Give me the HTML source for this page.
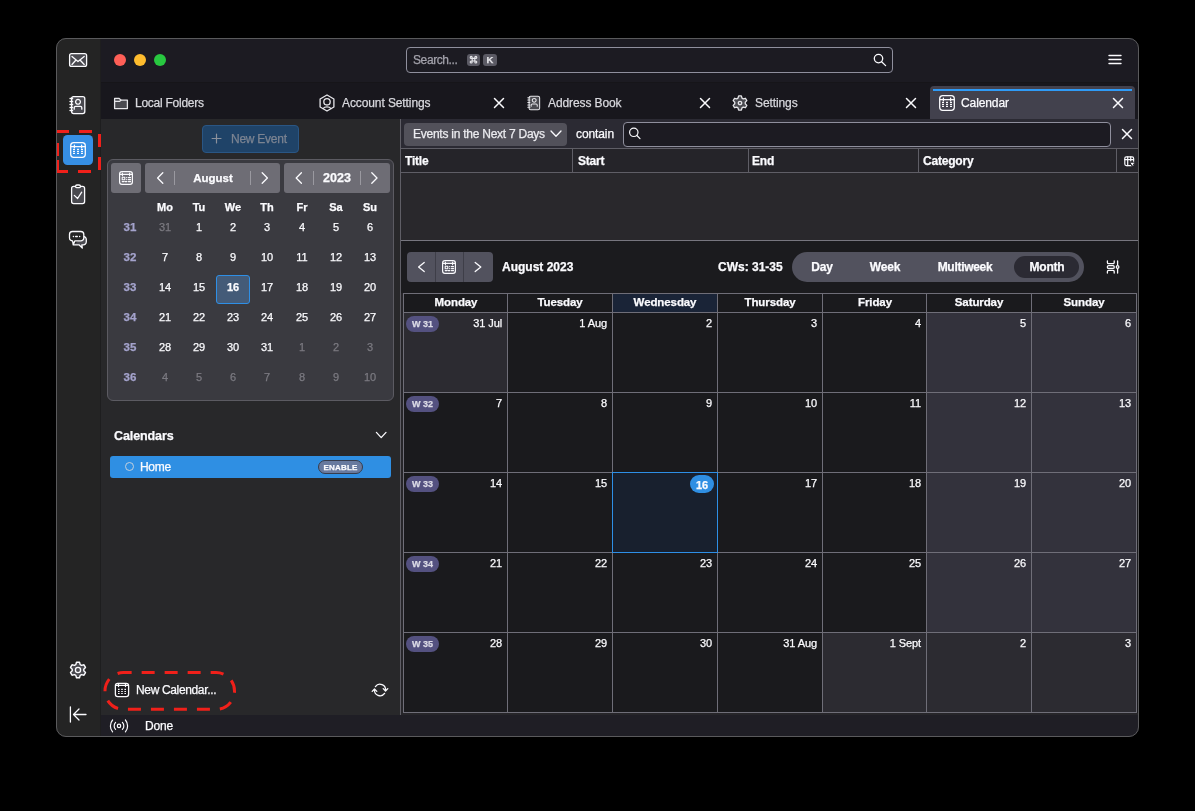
<!DOCTYPE html>
<html><head><meta charset="utf-8">
<style>
*{box-sizing:border-box;margin:0;padding:0}
html,body{width:1195px;height:811px;background:#000;overflow:hidden;font-family:"Liberation Sans",sans-serif;color:#fbfbfe}
.a{position:absolute}
#app{position:absolute;left:0;top:0;width:1195px;height:811px;clip-path:inset(38px 56px 74px 56px round 10px)}
.t{position:absolute;white-space:nowrap;line-height:1;will-change:transform;-webkit-text-stroke:0.25px currentColor}
svg{position:absolute;overflow:visible}
</style></head><body>
<div id="app">
<div class="a" style="left:56px;top:38px;width:45px;height:699px;background:#242424;"></div>
<div class="a" style="left:100px;top:38px;width:1px;height:699px;background:#1e1e1f;"></div>
<div class="a" style="left:101px;top:38px;width:1038px;height:45px;background:#1c1b22;"></div>
<div class="a" style="left:101px;top:83px;width:1038px;height:36px;background:#18171d;"></div>
<div class="a" style="left:101px;top:82px;width:1038px;height:1px;background:#161519;"></div>
<div class="a" style="left:101px;top:119px;width:300px;height:596px;background:#28282a;"></div>
<div class="a" style="left:401px;top:119px;width:738px;height:596px;background:#1b1b1e;"></div>
<div class="a" style="left:101px;top:715px;width:1038px;height:22px;background:#1f1e25;"></div>
<div class="a" style="left:114px;top:54px;width:12px;height:12px;background:#fe5f57;border-radius:6px"></div>
<div class="a" style="left:134px;top:54px;width:12px;height:12px;background:#febc2e;border-radius:6px"></div>
<div class="a" style="left:154px;top:54px;width:12px;height:12px;background:#28c840;border-radius:6px"></div>
<div class="a" style="left:406px;top:47px;width:487px;height:26px;background:#1c1b22;border:1px solid #8f8f9d;border-radius:4px"></div>
<div class="t" style="left:413.00px;top:54.00px;font-size:12px;color:#a3a2ab;letter-spacing:-0.4px;">Search...</div>
<div class="a" style="left:467px;top:54px;width:13px;height:12px;background:#5b5a64;border-radius:3px"></div>
<div class="a" style="left:483px;top:54px;width:14px;height:12px;background:#5b5a64;border-radius:3px"></div>
<div class="t" style="left:483.00px;top:55.00px;width:14px;text-align:center;font-size:9.5px;color:#e6e6ea;font-weight:700;">K</div>
<div class="a" style="left:930px;top:86px;width:205px;height:33px;background:#42414d;border-radius:4px 4px 0 0"></div>
<div class="a" style="left:933px;top:89px;width:199px;height:2px;background:#2f9bf7;"></div>
<div class="t" style="left:135.00px;top:97.00px;font-size:12px;color:#d9d9de;letter-spacing:-0.25px;">Local Folders</div>
<div class="t" style="left:342.00px;top:97.00px;font-size:12px;color:#d9d9de;letter-spacing:-0.1px;">Account Settings</div>
<div class="t" style="left:548.00px;top:97.00px;font-size:12px;color:#d9d9de;letter-spacing:-0.1px;">Address Book</div>
<div class="t" style="left:755.00px;top:97.00px;font-size:12px;color:#d9d9de;letter-spacing:-0.1px;">Settings</div>
<div class="t" style="left:961.00px;top:97.00px;font-size:12px;color:#fbfbfe;letter-spacing:-0.1px;">Calendar</div>
<div class="a" style="left:202px;top:125px;width:97px;height:28px;background:#1f4368;border-radius:4px;border:1px solid #2a5684"></div>
<div class="t" style="left:231.00px;top:133.00px;font-size:12px;color:#7c8492;letter-spacing:-0.25px;">New Event</div>
<div class="a" style="left:107px;top:159px;width:287px;height:242px;background:#3a3a40;border:1px solid #5c5b62;border-radius:6px"></div>
<div class="a" style="left:111px;top:163px;width:30px;height:30px;background:#6e6d75;border-radius:3px"></div>
<div class="a" style="left:145px;top:163px;width:135px;height:30px;background:#6e6d75;border-radius:3px"></div>
<div class="a" style="left:284px;top:163px;width:106px;height:30px;background:#6e6d75;border-radius:3px"></div>
<div class="a" style="left:174px;top:171px;width:1px;height:14px;background:#9a99a0;"></div>
<div class="a" style="left:250px;top:171px;width:1px;height:14px;background:#9a99a0;"></div>
<div class="a" style="left:313px;top:171px;width:1px;height:14px;background:#9a99a0;"></div>
<div class="a" style="left:360px;top:171px;width:1px;height:14px;background:#9a99a0;"></div>
<div class="t" style="left:182.80px;top:173.00px;width:60px;text-align:center;font-size:11.5px;color:#fbfbfe;font-weight:700;">August</div>
<div class="t" style="left:316.80px;top:172.00px;width:40px;text-align:center;font-size:12.5px;color:#fbfbfe;font-weight:700;">2023</div>
<div class="t" style="left:144.50px;top:202.00px;width:40px;text-align:center;font-size:11px;color:#fbfbfe;font-weight:700;">Mo</div>
<div class="t" style="left:178.80px;top:202.00px;width:40px;text-align:center;font-size:11px;color:#fbfbfe;font-weight:700;">Tu</div>
<div class="t" style="left:213.00px;top:202.00px;width:40px;text-align:center;font-size:11px;color:#fbfbfe;font-weight:700;">We</div>
<div class="t" style="left:247.30px;top:202.00px;width:40px;text-align:center;font-size:11px;color:#fbfbfe;font-weight:700;">Th</div>
<div class="t" style="left:281.50px;top:202.00px;width:40px;text-align:center;font-size:11px;color:#fbfbfe;font-weight:700;">Fr</div>
<div class="t" style="left:315.80px;top:202.00px;width:40px;text-align:center;font-size:11px;color:#fbfbfe;font-weight:700;">Sa</div>
<div class="t" style="left:350.00px;top:202.00px;width:40px;text-align:center;font-size:11px;color:#fbfbfe;font-weight:700;">Su</div>
<div class="a" style="left:216px;top:275px;width:34px;height:29px;background:#445b78;border:1px solid #2e8fe6;border-radius:3px"></div>
<div class="t" style="left:110.00px;top:222.00px;width:40px;text-align:center;font-size:11.5px;color:#a4a3cc;font-weight:700;">31</div>
<div class="t" style="left:144.50px;top:222.00px;width:40px;text-align:center;font-size:11px;color:#7b7a81;">31</div>
<div class="t" style="left:178.80px;top:222.00px;width:40px;text-align:center;font-size:11px;color:#fbfbfe;">1</div>
<div class="t" style="left:213.00px;top:222.00px;width:40px;text-align:center;font-size:11px;color:#fbfbfe;">2</div>
<div class="t" style="left:247.30px;top:222.00px;width:40px;text-align:center;font-size:11px;color:#fbfbfe;">3</div>
<div class="t" style="left:281.50px;top:222.00px;width:40px;text-align:center;font-size:11px;color:#fbfbfe;">4</div>
<div class="t" style="left:315.80px;top:222.00px;width:40px;text-align:center;font-size:11px;color:#fbfbfe;">5</div>
<div class="t" style="left:350.00px;top:222.00px;width:40px;text-align:center;font-size:11px;color:#fbfbfe;">6</div>
<div class="t" style="left:110.00px;top:252.00px;width:40px;text-align:center;font-size:11.5px;color:#a4a3cc;font-weight:700;">32</div>
<div class="t" style="left:144.50px;top:252.00px;width:40px;text-align:center;font-size:11px;color:#fbfbfe;">7</div>
<div class="t" style="left:178.80px;top:252.00px;width:40px;text-align:center;font-size:11px;color:#fbfbfe;">8</div>
<div class="t" style="left:213.00px;top:252.00px;width:40px;text-align:center;font-size:11px;color:#fbfbfe;">9</div>
<div class="t" style="left:247.30px;top:252.00px;width:40px;text-align:center;font-size:11px;color:#fbfbfe;">10</div>
<div class="t" style="left:281.50px;top:252.00px;width:40px;text-align:center;font-size:11px;color:#fbfbfe;">11</div>
<div class="t" style="left:315.80px;top:252.00px;width:40px;text-align:center;font-size:11px;color:#fbfbfe;">12</div>
<div class="t" style="left:350.00px;top:252.00px;width:40px;text-align:center;font-size:11px;color:#fbfbfe;">13</div>
<div class="t" style="left:110.00px;top:282.00px;width:40px;text-align:center;font-size:11.5px;color:#a4a3cc;font-weight:700;">33</div>
<div class="t" style="left:144.50px;top:282.00px;width:40px;text-align:center;font-size:11px;color:#fbfbfe;">14</div>
<div class="t" style="left:178.80px;top:282.00px;width:40px;text-align:center;font-size:11px;color:#fbfbfe;">15</div>
<div class="t" style="left:213.00px;top:282.00px;width:40px;text-align:center;font-size:11px;color:#fbfbfe;font-weight:700;">16</div>
<div class="t" style="left:247.30px;top:282.00px;width:40px;text-align:center;font-size:11px;color:#fbfbfe;">17</div>
<div class="t" style="left:281.50px;top:282.00px;width:40px;text-align:center;font-size:11px;color:#fbfbfe;">18</div>
<div class="t" style="left:315.80px;top:282.00px;width:40px;text-align:center;font-size:11px;color:#fbfbfe;">19</div>
<div class="t" style="left:350.00px;top:282.00px;width:40px;text-align:center;font-size:11px;color:#fbfbfe;">20</div>
<div class="t" style="left:110.00px;top:312.00px;width:40px;text-align:center;font-size:11.5px;color:#a4a3cc;font-weight:700;">34</div>
<div class="t" style="left:144.50px;top:312.00px;width:40px;text-align:center;font-size:11px;color:#fbfbfe;">21</div>
<div class="t" style="left:178.80px;top:312.00px;width:40px;text-align:center;font-size:11px;color:#fbfbfe;">22</div>
<div class="t" style="left:213.00px;top:312.00px;width:40px;text-align:center;font-size:11px;color:#fbfbfe;">23</div>
<div class="t" style="left:247.30px;top:312.00px;width:40px;text-align:center;font-size:11px;color:#fbfbfe;">24</div>
<div class="t" style="left:281.50px;top:312.00px;width:40px;text-align:center;font-size:11px;color:#fbfbfe;">25</div>
<div class="t" style="left:315.80px;top:312.00px;width:40px;text-align:center;font-size:11px;color:#fbfbfe;">26</div>
<div class="t" style="left:350.00px;top:312.00px;width:40px;text-align:center;font-size:11px;color:#fbfbfe;">27</div>
<div class="t" style="left:110.00px;top:342.00px;width:40px;text-align:center;font-size:11.5px;color:#a4a3cc;font-weight:700;">35</div>
<div class="t" style="left:144.50px;top:342.00px;width:40px;text-align:center;font-size:11px;color:#fbfbfe;">28</div>
<div class="t" style="left:178.80px;top:342.00px;width:40px;text-align:center;font-size:11px;color:#fbfbfe;">29</div>
<div class="t" style="left:213.00px;top:342.00px;width:40px;text-align:center;font-size:11px;color:#fbfbfe;">30</div>
<div class="t" style="left:247.30px;top:342.00px;width:40px;text-align:center;font-size:11px;color:#fbfbfe;">31</div>
<div class="t" style="left:281.50px;top:342.00px;width:40px;text-align:center;font-size:11px;color:#7b7a81;">1</div>
<div class="t" style="left:315.80px;top:342.00px;width:40px;text-align:center;font-size:11px;color:#7b7a81;">2</div>
<div class="t" style="left:350.00px;top:342.00px;width:40px;text-align:center;font-size:11px;color:#7b7a81;">3</div>
<div class="t" style="left:110.00px;top:372.00px;width:40px;text-align:center;font-size:11.5px;color:#a4a3cc;font-weight:700;">36</div>
<div class="t" style="left:144.50px;top:372.00px;width:40px;text-align:center;font-size:11px;color:#7b7a81;">4</div>
<div class="t" style="left:178.80px;top:372.00px;width:40px;text-align:center;font-size:11px;color:#7b7a81;">5</div>
<div class="t" style="left:213.00px;top:372.00px;width:40px;text-align:center;font-size:11px;color:#7b7a81;">6</div>
<div class="t" style="left:247.30px;top:372.00px;width:40px;text-align:center;font-size:11px;color:#7b7a81;">7</div>
<div class="t" style="left:281.50px;top:372.00px;width:40px;text-align:center;font-size:11px;color:#7b7a81;">8</div>
<div class="t" style="left:315.80px;top:372.00px;width:40px;text-align:center;font-size:11px;color:#7b7a81;">9</div>
<div class="t" style="left:350.00px;top:372.00px;width:40px;text-align:center;font-size:11px;color:#7b7a81;">10</div>
<div class="t" style="left:114.00px;top:430.00px;font-size:12.5px;color:#fbfbfe;font-weight:700;letter-spacing:-0.1px;">Calendars</div>
<div class="a" style="left:110px;top:456px;width:281px;height:22px;background:#2f8fe3;border-radius:3px"></div>
<div class="a" style="left:125px;top:462px;width:9px;height:9px;background:transparent;border-radius:50%;border:1.9px solid #c3d0de"></div>
<div class="t" style="left:140.00px;top:461.00px;font-size:12px;color:#fbfbfe;letter-spacing:-0.3px;">Home</div>
<div class="a" style="left:318px;top:460px;width:45px;height:14px;background:#687a9f;border-radius:7px;border:1px solid #363c4c"></div>
<div class="t" style="left:318.00px;top:464.00px;width:45px;text-align:center;font-size:8px;color:#fbfbfe;font-weight:700;letter-spacing:0.2px;">ENABLE</div>
<div class="t" style="left:136.00px;top:684.00px;font-size:12px;color:#fbfbfe;letter-spacing:-0.35px;">New Calendar...</div>
<div class="t" style="left:145.00px;top:720.00px;font-size:12px;color:#fbfbfe;letter-spacing:-0.2px;">Done</div>
<div class="a" style="left:401px;top:119px;width:738px;height:30px;background:#2b2a33;"></div>
<div class="a" style="left:404px;top:123px;width:163px;height:23px;background:#52515a;border-radius:4px"></div>
<div class="t" style="left:412.50px;top:128.00px;font-size:12px;color:#ececf0;letter-spacing:-0.25px;">Events in the Next 7 Days</div>
<div class="t" style="left:575.50px;top:128.00px;font-size:12px;color:#fbfbfe;letter-spacing:-0.1px;">contain</div>
<div class="a" style="left:623px;top:122px;width:488px;height:25px;background:#1c1b22;border:1px solid #8f8f9d;border-radius:4px"></div>
<div class="a" style="left:401px;top:149px;width:738px;height:24px;background:#252429;"></div>
<div class="a" style="left:401px;top:148px;width:738px;height:1px;background:#5f5e66;"></div>
<div class="a" style="left:401px;top:172px;width:738px;height:1px;background:#5f5e66;"></div>
<div class="a" style="left:572px;top:149px;width:1px;height:23px;background:#5f5e66;"></div>
<div class="a" style="left:748px;top:149px;width:1px;height:23px;background:#5f5e66;"></div>
<div class="a" style="left:918px;top:149px;width:1px;height:23px;background:#5f5e66;"></div>
<div class="a" style="left:1116px;top:149px;width:1px;height:23px;background:#5f5e66;"></div>
<div class="t" style="left:405.00px;top:155.00px;font-size:12px;color:#fbfbfe;font-weight:700;letter-spacing:-0.2px;">Title</div>
<div class="t" style="left:578.00px;top:155.00px;font-size:12px;color:#fbfbfe;font-weight:700;letter-spacing:-0.2px;">Start</div>
<div class="t" style="left:752.00px;top:155.00px;font-size:12px;color:#fbfbfe;font-weight:700;letter-spacing:-0.2px;">End</div>
<div class="t" style="left:923.00px;top:155.00px;font-size:12px;color:#fbfbfe;font-weight:700;letter-spacing:-0.2px;">Category</div>
<div class="a" style="left:401px;top:173px;width:738px;height:67px;background:#29282c;"></div>
<div class="a" style="left:401px;top:240px;width:738px;height:1px;background:#77767f;"></div>
<div class="a" style="left:400px;top:119px;width:1px;height:596px;background:#5f5e66;"></div>
<div class="a" style="left:407px;top:252px;width:86px;height:30px;background:#52525e;border-radius:4px"></div>
<div class="a" style="left:435px;top:252px;width:1px;height:30px;background:#3e3e48;"></div>
<div class="a" style="left:463px;top:252px;width:1px;height:30px;background:#3e3e48;"></div>
<div class="t" style="left:502.00px;top:261.00px;font-size:12px;color:#fbfbfe;font-weight:700;">August 2023</div>
<div class="t" style="left:718.00px;top:261.00px;font-size:12px;color:#fbfbfe;font-weight:700;">CWs: 31-35</div>
<div class="a" style="left:792px;top:252px;width:292px;height:30px;background:#52525e;border-radius:15px"></div>
<div class="a" style="left:1014px;top:256px;width:65px;height:22px;background:#2b2a33;border-radius:11px"></div>
<div class="t" style="left:782.00px;top:261.00px;width:80px;text-align:center;font-size:12px;color:#fbfbfe;font-weight:700;letter-spacing:-0.2px;">Day</div>
<div class="t" style="left:845.00px;top:261.00px;width:80px;text-align:center;font-size:12px;color:#fbfbfe;font-weight:700;letter-spacing:-0.2px;">Week</div>
<div class="t" style="left:924.80px;top:261.00px;width:80px;text-align:center;font-size:12px;color:#fbfbfe;font-weight:700;letter-spacing:-0.3px;">Multiweek</div>
<div class="t" style="left:1006.60px;top:261.00px;width:80px;text-align:center;font-size:12px;color:#fbfbfe;font-weight:700;letter-spacing:-0.2px;">Month</div>
<div class="a" style="left:401px;top:293px;width:2px;height:422px;background:#262529;"></div>
<div class="a" style="left:401px;top:713px;width:738px;height:2px;background:#262529;"></div>
<div class="a" style="left:403px;top:293px;width:734px;height:420px;background:#6f6e78;"></div>
<div class="a" style="left:404px;top:294px;width:103px;height:18px;background:#1a1a1d;"></div>
<div class="t" style="left:405.50px;top:297.00px;width:100px;text-align:center;font-size:11.5px;color:#fbfbfe;font-weight:700;letter-spacing:-0.1px;">Monday</div>
<div class="a" style="left:508px;top:294px;width:104px;height:18px;background:#1a1a1d;"></div>
<div class="t" style="left:510.00px;top:297.00px;width:100px;text-align:center;font-size:11.5px;color:#fbfbfe;font-weight:700;letter-spacing:-0.1px;">Tuesday</div>
<div class="a" style="left:613px;top:294px;width:104px;height:18px;background:#1a2437;"></div>
<div class="t" style="left:615.00px;top:297.00px;width:100px;text-align:center;font-size:11.5px;color:#fbfbfe;font-weight:700;letter-spacing:-0.1px;">Wednesday</div>
<div class="a" style="left:718px;top:294px;width:104px;height:18px;background:#1a1a1d;"></div>
<div class="t" style="left:720.00px;top:297.00px;width:100px;text-align:center;font-size:11.5px;color:#fbfbfe;font-weight:700;letter-spacing:-0.1px;">Thursday</div>
<div class="a" style="left:823px;top:294px;width:103px;height:18px;background:#1a1a1d;"></div>
<div class="t" style="left:824.50px;top:297.00px;width:100px;text-align:center;font-size:11.5px;color:#fbfbfe;font-weight:700;letter-spacing:-0.1px;">Friday</div>
<div class="a" style="left:927px;top:294px;width:104px;height:18px;background:#1a1a1d;"></div>
<div class="t" style="left:929.00px;top:297.00px;width:100px;text-align:center;font-size:11.5px;color:#fbfbfe;font-weight:700;letter-spacing:-0.1px;">Saturday</div>
<div class="a" style="left:1032px;top:294px;width:104px;height:18px;background:#1a1a1d;"></div>
<div class="t" style="left:1034.00px;top:297.00px;width:100px;text-align:center;font-size:11.5px;color:#fbfbfe;font-weight:700;letter-spacing:-0.1px;">Sunday</div>
<div class="a" style="left:404px;top:313px;width:103px;height:79px;background:#2c2b31;"></div>
<div class="t" style="left:412.00px;top:318.00px;width:90px;text-align:right;font-size:11px;color:#fbfbfe;letter-spacing:-0.1px;">31 Jul</div>
<div class="a" style="left:508px;top:313px;width:104px;height:79px;background:#1a1a1d;"></div>
<div class="t" style="left:517.00px;top:318.00px;width:90px;text-align:right;font-size:11px;color:#fbfbfe;letter-spacing:-0.1px;">1 Aug</div>
<div class="a" style="left:613px;top:313px;width:104px;height:79px;background:#1a1a1d;"></div>
<div class="t" style="left:622.00px;top:318.00px;width:90px;text-align:right;font-size:11px;color:#fbfbfe;letter-spacing:-0.1px;">2</div>
<div class="a" style="left:718px;top:313px;width:104px;height:79px;background:#1a1a1d;"></div>
<div class="t" style="left:727.00px;top:318.00px;width:90px;text-align:right;font-size:11px;color:#fbfbfe;letter-spacing:-0.1px;">3</div>
<div class="a" style="left:823px;top:313px;width:103px;height:79px;background:#1a1a1d;"></div>
<div class="t" style="left:831.00px;top:318.00px;width:90px;text-align:right;font-size:11px;color:#fbfbfe;letter-spacing:-0.1px;">4</div>
<div class="a" style="left:927px;top:313px;width:104px;height:79px;background:#33323c;"></div>
<div class="t" style="left:936.00px;top:318.00px;width:90px;text-align:right;font-size:11px;color:#fbfbfe;letter-spacing:-0.1px;">5</div>
<div class="a" style="left:1032px;top:313px;width:104px;height:79px;background:#33323c;"></div>
<div class="t" style="left:1041.00px;top:318.00px;width:90px;text-align:right;font-size:11px;color:#fbfbfe;letter-spacing:-0.1px;">6</div>
<div class="a" style="left:406px;top:316px;width:33px;height:16px;background:#545180;border-radius:8px"></div>
<div class="t" style="left:406.00px;top:320.00px;width:33px;text-align:center;font-size:9px;color:#dcdbe6;font-weight:700;">W 31</div>
<div class="a" style="left:404px;top:393px;width:103px;height:79px;background:#1a1a1d;"></div>
<div class="t" style="left:412.00px;top:398.00px;width:90px;text-align:right;font-size:11px;color:#fbfbfe;letter-spacing:-0.1px;">7</div>
<div class="a" style="left:508px;top:393px;width:104px;height:79px;background:#1a1a1d;"></div>
<div class="t" style="left:517.00px;top:398.00px;width:90px;text-align:right;font-size:11px;color:#fbfbfe;letter-spacing:-0.1px;">8</div>
<div class="a" style="left:613px;top:393px;width:104px;height:79px;background:#1a1a1d;"></div>
<div class="t" style="left:622.00px;top:398.00px;width:90px;text-align:right;font-size:11px;color:#fbfbfe;letter-spacing:-0.1px;">9</div>
<div class="a" style="left:718px;top:393px;width:104px;height:79px;background:#1a1a1d;"></div>
<div class="t" style="left:727.00px;top:398.00px;width:90px;text-align:right;font-size:11px;color:#fbfbfe;letter-spacing:-0.1px;">10</div>
<div class="a" style="left:823px;top:393px;width:103px;height:79px;background:#1a1a1d;"></div>
<div class="t" style="left:831.00px;top:398.00px;width:90px;text-align:right;font-size:11px;color:#fbfbfe;letter-spacing:-0.1px;">11</div>
<div class="a" style="left:927px;top:393px;width:104px;height:79px;background:#33323c;"></div>
<div class="t" style="left:936.00px;top:398.00px;width:90px;text-align:right;font-size:11px;color:#fbfbfe;letter-spacing:-0.1px;">12</div>
<div class="a" style="left:1032px;top:393px;width:104px;height:79px;background:#33323c;"></div>
<div class="t" style="left:1041.00px;top:398.00px;width:90px;text-align:right;font-size:11px;color:#fbfbfe;letter-spacing:-0.1px;">13</div>
<div class="a" style="left:406px;top:396px;width:33px;height:16px;background:#545180;border-radius:8px"></div>
<div class="t" style="left:406.00px;top:400.00px;width:33px;text-align:center;font-size:9px;color:#dcdbe6;font-weight:700;">W 32</div>
<div class="a" style="left:404px;top:473px;width:103px;height:79px;background:#1a1a1d;"></div>
<div class="t" style="left:412.00px;top:478.00px;width:90px;text-align:right;font-size:11px;color:#fbfbfe;letter-spacing:-0.1px;">14</div>
<div class="a" style="left:508px;top:473px;width:104px;height:79px;background:#1a1a1d;"></div>
<div class="t" style="left:517.00px;top:478.00px;width:90px;text-align:right;font-size:11px;color:#fbfbfe;letter-spacing:-0.1px;">15</div>
<div class="a" style="left:613px;top:473px;width:104px;height:79px;background:#18202e;"></div>
<div class="a" style="left:612px;top:472px;width:106px;height:81px;background:transparent;border:1px solid #2e8fe6"></div>
<div class="a" style="left:690px;top:475px;width:24px;height:18px;background:#2f8fe3;border-radius:9px"></div>
<div class="t" style="left:690.00px;top:480.00px;width:24px;text-align:center;font-size:11px;color:#fbfbfe;font-weight:700;">16</div>
<div class="a" style="left:718px;top:473px;width:104px;height:79px;background:#1a1a1d;"></div>
<div class="t" style="left:727.00px;top:478.00px;width:90px;text-align:right;font-size:11px;color:#fbfbfe;letter-spacing:-0.1px;">17</div>
<div class="a" style="left:823px;top:473px;width:103px;height:79px;background:#1a1a1d;"></div>
<div class="t" style="left:831.00px;top:478.00px;width:90px;text-align:right;font-size:11px;color:#fbfbfe;letter-spacing:-0.1px;">18</div>
<div class="a" style="left:927px;top:473px;width:104px;height:79px;background:#33323c;"></div>
<div class="t" style="left:936.00px;top:478.00px;width:90px;text-align:right;font-size:11px;color:#fbfbfe;letter-spacing:-0.1px;">19</div>
<div class="a" style="left:1032px;top:473px;width:104px;height:79px;background:#33323c;"></div>
<div class="t" style="left:1041.00px;top:478.00px;width:90px;text-align:right;font-size:11px;color:#fbfbfe;letter-spacing:-0.1px;">20</div>
<div class="a" style="left:406px;top:476px;width:33px;height:16px;background:#545180;border-radius:8px"></div>
<div class="t" style="left:406.00px;top:480.00px;width:33px;text-align:center;font-size:9px;color:#dcdbe6;font-weight:700;">W 33</div>
<div class="a" style="left:404px;top:553px;width:103px;height:79px;background:#1a1a1d;"></div>
<div class="t" style="left:412.00px;top:558.00px;width:90px;text-align:right;font-size:11px;color:#fbfbfe;letter-spacing:-0.1px;">21</div>
<div class="a" style="left:508px;top:553px;width:104px;height:79px;background:#1a1a1d;"></div>
<div class="t" style="left:517.00px;top:558.00px;width:90px;text-align:right;font-size:11px;color:#fbfbfe;letter-spacing:-0.1px;">22</div>
<div class="a" style="left:613px;top:553px;width:104px;height:79px;background:#1a1a1d;"></div>
<div class="t" style="left:622.00px;top:558.00px;width:90px;text-align:right;font-size:11px;color:#fbfbfe;letter-spacing:-0.1px;">23</div>
<div class="a" style="left:718px;top:553px;width:104px;height:79px;background:#1a1a1d;"></div>
<div class="t" style="left:727.00px;top:558.00px;width:90px;text-align:right;font-size:11px;color:#fbfbfe;letter-spacing:-0.1px;">24</div>
<div class="a" style="left:823px;top:553px;width:103px;height:79px;background:#1a1a1d;"></div>
<div class="t" style="left:831.00px;top:558.00px;width:90px;text-align:right;font-size:11px;color:#fbfbfe;letter-spacing:-0.1px;">25</div>
<div class="a" style="left:927px;top:553px;width:104px;height:79px;background:#33323c;"></div>
<div class="t" style="left:936.00px;top:558.00px;width:90px;text-align:right;font-size:11px;color:#fbfbfe;letter-spacing:-0.1px;">26</div>
<div class="a" style="left:1032px;top:553px;width:104px;height:79px;background:#33323c;"></div>
<div class="t" style="left:1041.00px;top:558.00px;width:90px;text-align:right;font-size:11px;color:#fbfbfe;letter-spacing:-0.1px;">27</div>
<div class="a" style="left:406px;top:556px;width:33px;height:16px;background:#545180;border-radius:8px"></div>
<div class="t" style="left:406.00px;top:560.00px;width:33px;text-align:center;font-size:9px;color:#dcdbe6;font-weight:700;">W 34</div>
<div class="a" style="left:404px;top:633px;width:103px;height:79px;background:#1a1a1d;"></div>
<div class="t" style="left:412.00px;top:638.00px;width:90px;text-align:right;font-size:11px;color:#fbfbfe;letter-spacing:-0.1px;">28</div>
<div class="a" style="left:508px;top:633px;width:104px;height:79px;background:#1a1a1d;"></div>
<div class="t" style="left:517.00px;top:638.00px;width:90px;text-align:right;font-size:11px;color:#fbfbfe;letter-spacing:-0.1px;">29</div>
<div class="a" style="left:613px;top:633px;width:104px;height:79px;background:#1a1a1d;"></div>
<div class="t" style="left:622.00px;top:638.00px;width:90px;text-align:right;font-size:11px;color:#fbfbfe;letter-spacing:-0.1px;">30</div>
<div class="a" style="left:718px;top:633px;width:104px;height:79px;background:#1a1a1d;"></div>
<div class="t" style="left:727.00px;top:638.00px;width:90px;text-align:right;font-size:11px;color:#fbfbfe;letter-spacing:-0.1px;">31 Aug</div>
<div class="a" style="left:823px;top:633px;width:103px;height:79px;background:#2c2b31;"></div>
<div class="t" style="left:831.00px;top:638.00px;width:90px;text-align:right;font-size:11px;color:#fbfbfe;letter-spacing:-0.1px;">1 Sept</div>
<div class="a" style="left:927px;top:633px;width:104px;height:79px;background:#2c2b31;"></div>
<div class="t" style="left:936.00px;top:638.00px;width:90px;text-align:right;font-size:11px;color:#fbfbfe;letter-spacing:-0.1px;">2</div>
<div class="a" style="left:1032px;top:633px;width:104px;height:79px;background:#2c2b31;"></div>
<div class="t" style="left:1041.00px;top:638.00px;width:90px;text-align:right;font-size:11px;color:#fbfbfe;letter-spacing:-0.1px;">3</div>
<div class="a" style="left:406px;top:636px;width:33px;height:16px;background:#545180;border-radius:8px"></div>
<div class="t" style="left:406.00px;top:640.00px;width:33px;text-align:center;font-size:9px;color:#dcdbe6;font-weight:700;">W 35</div>
<svg width="1195" height="811" style="left:0;top:0" viewBox="0 0 1195 811" fill="none" stroke="#fbfbfe" stroke-width="1.3" stroke-linecap="round" stroke-linejoin="round">
  <defs>
    <g id="gear"><path d="M-1.37 -7.07L1.37 -7.07L1.99 -4.91L3.26 -4.18L5.43 -4.72L6.81 -2.34L5.25 -0.74L5.25 0.74L6.81 2.34L5.43 4.72L3.26 4.18L1.99 4.91L1.37 7.07L-1.37 7.07L-1.99 4.91L-3.26 4.18L-5.43 4.72L-6.81 2.34L-5.25 0.74L-5.25 -0.74L-6.81 -2.34L-5.43 -4.72L-3.26 -4.18L-1.99 -4.91Z" fill="#4a4a50"/><circle r="1.7"/></g>
    <g id="cal"><rect x="-7.3" y="-7.3" width="14.6" height="14.6" rx="3"/><path d="M-7 -3.4H7M-3.6 -4.8V-2.2M3.6 -4.8V-2.2"/><g fill="#fbfbfe" stroke="none"><rect x="-5" y="-1.2" width="2" height="1.2"/><rect x="-1" y="-1.2" width="2" height="1.2"/><rect x="3" y="-1.2" width="2" height="1.2"/><rect x="-5" y="0.8" width="2" height="1.2"/><rect x="-1" y="0.8" width="2" height="1.2"/><rect x="3" y="0.8" width="2" height="1.2"/><rect x="-5" y="2.8" width="2" height="1.2"/><rect x="-1" y="2.8" width="2" height="1.2"/><rect x="3" y="2.8" width="2" height="1.2"/></g></g>
    <g id="abook"><rect x="-6.4" y="-8.4" width="13.2" height="17" rx="2" fill="#4a4a50"/><path d="M-8 -6.5h2.6M-8 -3.5h2.6M-8 -0.5h2.6M-8 2.5h2.6M-8 5.5h2.6"/><circle cx="0" cy="-3.2" r="2.4"/><path d="M-3.8 4.2v-1.4a1.4 1.4 0 0 1 1.4 -1.4h4.8a1.4 1.4 0 0 1 1.4 1.4v1.4"/></g>
    <path id="x" d="M-4.5 -4.5L4.5 4.5M4.5 -4.5L-4.5 4.5" stroke-width="1.5"/>
  </defs>
  <!-- spaces icons -->
  <rect x="69.6" y="53.6" width="17" height="12.8" rx="2" fill="#4a4a50"/>
  <path d="M72 56.5L78 61.5L84.2 56.5M72 64.5L76 60M84.2 64.5L80 60"/>
  <use href="#abook" transform="translate(78 105)"/>
  <!-- calendar space button -->
  <rect x="63" y="135" width="30" height="30" rx="4.5" fill="#368fe5" stroke="none"/>
  <use href="#cal" transform="translate(78 150)"/>
  <!-- tasks -->
  <rect x="71.6" y="186.4" width="13" height="17.2" rx="2" fill="#4a4a50"/>
  <rect x="75.6" y="185" width="4.8" height="2.7" rx="1.3" fill="#242424"/>
  <path d="M74.3 195.4L77.6 198.5L81.7 192.2"/>
  <!-- chat -->
  <path d="M83 236.5a3 3 0 0 1 3.3 3v2.3a3 3 0 0 1-3 3h-1.5l0.5 3.2l-3.3-3.2h-5" fill="#4a4a50"/>
  <path d="M72.5 231.5h8.3a3 3 0 0 1 3 3v3.4a3 3 0 0 1-3 3h-6l-1.6 4l-0.6-4h-0.1a3 3 0 0 1-3-3v-3.4a3 3 0 0 1 3-3z" fill="#242424"/>
  <path d="M73.4 236.5h0.1M75.7 236.5h1.6M79.6 236.5h0.1" stroke-width="1.4"/>
  <!-- gear -->
  <use href="#gear" transform="translate(78 670) scale(1.1)"/><circle cx="78" cy="670" r="2.6" fill="#4a4a50"/>
  <!-- collapse -->
  <path d="M70.4 707v15M73.5 714.5H86M73.5 714.5l5.5-5.5M73.5 714.5l5.5 5.5"/>
  <!-- red dashed around calendar space -->
  <g fill="#f0201a" stroke="none"><rect x="56" y="130" width="13" height="3"/><rect x="79" y="130" width="13" height="3"/><rect x="98" y="134" width="3" height="13"/><rect x="98" y="157" width="3" height="13"/><rect x="56" y="143" width="3" height="13"/><rect x="56" y="170" width="12" height="3"/><rect x="56" y="160" width="3" height="13"/><rect x="78" y="170" width="13" height="3"/></g>
  <g stroke="#e6e6ea" stroke-width="1.1"><rect x="472.2" y="58.4" width="2.6" height="2.6"/><circle cx="471.2" cy="57.4" r="1"/><circle cx="475.8" cy="57.4" r="1"/><circle cx="471.2" cy="62" r="1"/><circle cx="475.8" cy="62" r="1"/></g>
  <!-- search icon -->
  <circle cx="878.5" cy="58.6" r="4.2"/>
  <path d="M881.6 61.7L885.6 65.6"/>
  <!-- hamburger -->
  <path d="M1109 55.5h12M1109 59.5h12M1109 63.5h12" stroke-width="1.4"/>
  <!-- tab icons -->
  <path d="M114.6 98.4h4.6l1.8 1.8h6.4v8.4h-12.8z" fill="#4a4a50" stroke="#e6e6ea"/><path d="M114.6 101.4h4.8l1.6-1.2" stroke="#e6e6ea"/>
  <path d="M327 95l6.9 4v8l-6.9 4l-6.9-4v-8z" stroke="#e6e6ea"/>
  <circle cx="327" cy="101.8" r="3.2" stroke="#e6e6ea"/>
  <path d="M323 108.6a4.5 3 0 0 1 8 0" stroke="#e6e6ea"/>
  <use href="#abook" transform="translate(534.2 102.9) scale(0.8)" stroke="#e6e6ea"/>
  <use href="#gear" transform="translate(740 103)" stroke="#e6e6ea"/>
  <use href="#cal" transform="translate(947 103)"/>
  <use href="#x" transform="translate(499 103)"/>
  <use href="#x" transform="translate(705 103)"/>
  <use href="#x" transform="translate(911 103)"/>
  <use href="#x" transform="translate(1118 103)"/>

  <!-- ===== sidebar icons ===== -->
  <path d="M212.1 138.5h8.9M216.5 134v8.9" stroke="#8b919c" stroke-width="1.2"/>
  <g transform="translate(126 178)">
    <rect x="-6.4" y="-6.4" width="12.8" height="12.8" rx="2.4" stroke-width="1.2"/><path d="M-6.2 -3.6H6.2M-3.6 -5V-2.2M3.6 -5V-2.2" stroke-width="1.1"/>
    <rect x="-3.8" y="-0.8" width="2.6" height="2.6" stroke-width="1.1"/>
    <path d="M0.6 -0.4h0.2M2.4 -0.4h2.2M0.6 1.6h0.2M2.4 1.6h2.2M-3.8 3.6h1.8M-0.9 3.6h1.8M2.4 3.6h2.2" stroke-width="1.1"/>
  </g>
  <path d="M162.8 172.8L157.6 178L162.8 183.2M262.2 172.8L267.4 178L262.2 183.2M301.4 172.8L296.2 178L301.4 183.2M371.8 172.8L377 178L371.8 183.2" stroke-width="1.3"/>
  <path d="M376.4 432.4L381.2 437.6L386 432.4" stroke-width="1.3"/>
  <g transform="translate(122 690)">
    <rect x="-6.6" y="-6.6" width="13.2" height="13.2" rx="2.4" fill="#1c1b1f"/><path d="M-6.4 -4.6H6.4M-3.5 -6V-3.4M3.5 -6V-3.4"/>
    <path d="M-4 -0.6h1.6M-0.8 -0.6h1.6M2.4 -0.6h1.6M-4 1.5h1.6M-0.8 1.5h1.6M2.4 1.5h1.6M-4 3.5h1.6M-0.8 3.5h1.6M2.4 3.5h1.6" stroke-width="1.1" stroke-linecap="butt"/>
  </g>
  <path d="M375.4 686.6A5.6 5.6 0 0 1 385.5 690.6M383.2 688.6L385.5 691L387.8 688.6M384.6 693.4A5.6 5.6 0 0 1 374.5 689.4M372.2 691.4L374.5 689L376.8 691.4" stroke-width="1.3"/>
  <rect x="105" y="672.6" width="129.5" height="36.7" rx="18.35" fill="none" stroke="#f0201a" stroke-width="3" stroke-dasharray="13 10" stroke-dashoffset="4.7" stroke-linecap="butt"/>
  <circle cx="119" cy="725.9" r="1.7" stroke-width="1.2"/>
  <path d="M115.6 722.4A5 5 0 0 0 115.6 729.4M122.4 722.4A5 5 0 0 1 122.4 729.4M112.6 720A9 9 0 0 0 112.6 731.8M125.4 720A9 9 0 0 1 125.4 731.8" stroke-width="1.2"/>
  <!-- ===== content icons ===== -->
  <path d="M551 131L556 136.3L561 131" stroke-width="1.3"/>
  <circle cx="633.8" cy="132.3" r="4.2" stroke-width="1.2"/><path d="M636.9 135.5L640 138.6" stroke-width="1.2"/>
  <use href="#x" transform="translate(1127 134)"/>
  <g stroke-width="1.2">
    <rect x="1124.8" y="156.8" width="8.8" height="8.8" rx="1.5"/><path d="M1124.8 159.6H1133.6M1127.7 156.8V165.6M1130.7 156.8V161"/>
    <path d="M1129.9 162.2h5.2l-2.6 4z" fill="#fbfbfe" stroke="#252429" stroke-width="1"/>
  </g>
  <path d="M424.2 262.4L418.6 267L424.2 271.6M475.2 262.4L480.8 267L475.2 271.6" stroke-width="1.3"/>
  <g transform="translate(449 267)" stroke-width="1.2">
    <rect x="-6.4" y="-6.4" width="12.8" height="12.8" rx="2.4"/><path d="M-6.2 -3.6H6.2M-3.6 -5V-2.2M3.6 -5V-2.2" stroke-width="1.1"/>
    <rect x="-3.8" y="-0.8" width="2.6" height="2.6" stroke-width="1.1"/>
    <path d="M0.6 -0.4h0.2M2.4 -0.4h2.2M0.6 1.6h0.2M2.4 1.6h2.2M-3.8 3.6h1.8M-0.9 3.6h1.8M2.4 3.6h2.2" stroke-width="1.1"/>
  </g>
  <g stroke-width="1.3">
    <path d="M1107.4 261v1.4a1.2 1.2 0 0 0 1.2 1.2h4.4a1.2 1.2 0 0 0 1.2 -1.2V261"/>
    <rect x="1107.4" y="265.6" width="6.8" height="2.8" rx="1.2"/>
    <path d="M1107.4 273v-1.4a1.2 1.2 0 0 1 1.2 -1.2h4.4a1.2 1.2 0 0 1 1.2 1.2V273"/>
    <path d="M1117.6 261v3.6M1117.6 269.2V273"/><circle cx="1117.6" cy="267" r="1.3"/>
  </g>
</svg>

</div>
<div class="a" style="left:56px;top:38px;width:1083px;height:699px;border:1px solid #5a5a5c;border-radius:10px"></div>
</body></html>
